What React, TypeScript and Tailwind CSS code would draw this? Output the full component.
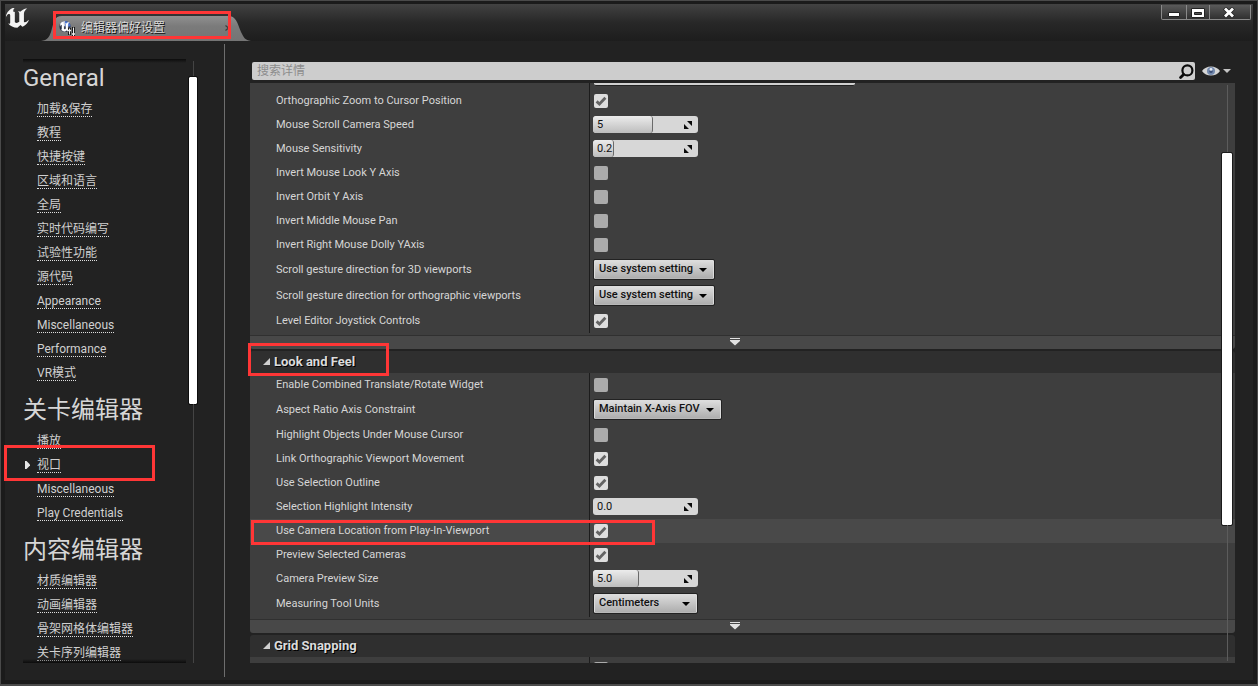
import React, { useState } from "react";

const UE_PATH =
  "M19.13 13.729c-.206.997-1.126 3.557-4.06 4.942l-1.179-1.325-1.988 2a7.338 7.338 0 01-5.804-2.978 2.859 2.859 0 00.65.123c.326.006.678-.114.678-.66v-5.394a.89.89 0 00-1.116-.89c-.92.212-1.656 2.509-1.656 2.509a7.304 7.304 0 012.528-5.597 7.408 7.408 0 013.73-1.721c-1.006.573-1.57 1.507-1.57 2.29 0 1.262.76 1.109.984.923v7.28a1.157 1.157 0 00.148.256 1.075 1.075 0 00.88.445c.76 0 1.747-.868 1.747-.868V9.172c0-.6-.452-1.324-.905-1.572 0 0 .838-.149 1.484.346a5.537 5.537 0 01.387-.425c1.508-1.48 2.929-1.902 4.112-2.112 0 0-2.151 1.69-2.151 3.96 0 1.687.043 5.801.043 5.801.799.771 1.986-.342 3.059-1.441z";

type Group = { title: string; links: string[] };

const groups: Group[] = [
  {
    title: "General",
    links: [
      "加载&保存",
      "教程",
      "快捷按键",
      "区域和语言",
      "全局",
      "实时代码编写",
      "试验性功能",
      "源代码",
      "Appearance",
      "Miscellaneous",
      "Performance",
      "VR模式",
    ],
  },
  { title: "关卡编辑器", links: ["播放", "视口", "Miscellaneous", "Play Credentials"] },
  { title: "内容编辑器", links: ["材质编辑器", "动画编辑器", "骨架网格体编辑器", "关卡序列编辑器"] },
];

type Setting =
  | { label: string; kind: "check"; on: boolean; active?: boolean }
  | { label: string; kind: "number"; value: string; fill: number }
  | { label: string; kind: "choice"; value: string; wide: string };

const viewportSettings: Setting[] = [
  { label: "Orthographic Zoom to Cursor Position", kind: "check", on: true },
  { label: "Mouse Scroll Camera Speed", kind: "number", value: "5", fill: 57 },
  { label: "Mouse Sensitivity", kind: "number", value: "0.2", fill: 20 },
  { label: "Invert Mouse Look Y Axis", kind: "check", on: false },
  { label: "Invert Orbit Y Axis", kind: "check", on: false },
  { label: "Invert Middle Mouse Pan", kind: "check", on: false },
  { label: "Invert Right Mouse Dolly YAxis", kind: "check", on: false },
  { label: "Scroll gesture direction for 3D viewports", kind: "choice", value: "Use system setting", wide: "w-[120px]" },
  { label: "Scroll gesture direction for orthographic viewports", kind: "choice", value: "Use system setting", wide: "w-[120px]" },
  { label: "Level Editor Joystick Controls", kind: "check", on: true },
];

const lookSettings: Setting[] = [
  { label: "Enable Combined Translate/Rotate Widget", kind: "check", on: false },
  { label: "Aspect Ratio Axis Constraint", kind: "choice", value: "Maintain X-Axis FOV", wide: "w-[127px]" },
  { label: "Highlight Objects Under Mouse Cursor", kind: "check", on: false },
  { label: "Link Orthographic Viewport Movement", kind: "check", on: true },
  { label: "Use Selection Outline", kind: "check", on: true },
  { label: "Selection Highlight Intensity", kind: "number", value: "0.0", fill: 0 },
  { label: "Use Camera Location from Play-In-Viewport", kind: "check", on: true, active: true },
  { label: "Preview Selected Cameras", kind: "check", on: true },
  { label: "Camera Preview Size", kind: "number", value: "5.0", fill: 44 },
  { label: "Measuring Tool Units", kind: "choice", value: "Centimeters", wide: "w-[103px]" },
];

function CheckControl({ id, on }: { id: string; on: boolean }) {
  const [checked, setChecked] = useState(on);
  return (
    <span className="relative ml-px flex size-[14px]">
      <input
        id={id}
        type="checkbox"
        checked={checked}
        onChange={(e) => setChecked(e.target.checked)}
        className="size-[14px] appearance-none rounded-[2px] bg-[#ababab] checked:bg-[#dedede]"
      />
      {checked && (
        <svg viewBox="0 0 14 14" className="pointer-events-none absolute inset-0 size-[14px]" aria-hidden="true">
          <path d="M2.6 7.4 5.4 10 11.4 3.8" fill="none" stroke="#646464" strokeWidth="2.8" />
        </svg>
      )}
    </span>
  );
}

function NumberControl({ id, value, fill }: { id: string; value: string; fill: number }) {
  return (
    <span className="relative flex h-[17px] w-[105px] overflow-hidden rounded-[3px] bg-[#d7d7d7]">
      {fill > 0 && (
        <span
          className="absolute inset-y-0 left-0 rounded-[3px] border-r border-[#6a6a6a] bg-linear-to-b from-[#ececec] to-[#bdbdbd]"
          style={{ width: `${fill}%` }}
        />
      )}
      <input
        id={id}
        type="text"
        defaultValue={value}
        className="relative w-full bg-transparent pl-1 text-[11px] leading-[17px] text-[#111] outline-none"
      />
      <svg viewBox="0 0 8 8" className="pointer-events-none absolute right-1.5 top-[5px] size-2" aria-hidden="true">
        <path d="M3 0H8V5zM0 3V8H5z" fill="#0a0a0a" />
      </svg>
    </span>
  );
}

function ChoiceControl({ id, value, wide }: { id: string; value: string; wide: string }) {
  return (
    <span className={`relative ml-px flex h-[19px] ${wide} rounded-[1px] outline outline-[#222]`}>
      <select
        id={id}
        defaultValue={value}
        className="h-full w-full appearance-none rounded-[1px] border border-[#dcdcdc] border-b-[#b8b8b8] bg-linear-to-b from-[#dcdcdc] to-[#aeaeae] pl-1 text-[11px] font-medium text-[#111]"
      >
        <option>{value}</option>
      </select>
      <svg viewBox="0 0 8 4" className="pointer-events-none absolute right-[7px] top-2 h-1 w-2" aria-hidden="true">
        <path d="M0 0H8L4 4z" fill="#000" />
      </svg>
    </span>
  );
}

function SettingRow({ item, id }: { item: Setting; id: string }) {
  const tall = item.kind === "choice";
  const active = item.kind === "check" && item.active;
  return (
    <div className={`flex ${tall ? "h-[26px]" : "h-6"} ${active ? "bg-[#494949]" : ""}`}>
      <label
        htmlFor={id}
        className="flex w-[340px] shrink-0 items-center border-r border-[#1c1c1c] pl-[26px] text-[11px] text-[#d6d6d6]"
      >
        {item.label}
      </label>
      <div className={`flex items-center pl-[3px] ${item.kind === "check" ? "" : "pb-px"}`}>
        {item.kind === "check" && <CheckControl id={id} on={item.on} />}
        {item.kind === "number" && <NumberControl id={id} value={item.value} fill={item.fill} />}
        {item.kind === "choice" && <ChoiceControl id={id} value={item.value} wide={item.wide} />}
      </div>
    </div>
  );
}

function Rows({ items, prefix }: { items: Setting[]; prefix: string }) {
  return (
    <div className="bg-[#3e3e3e] pb-0.5">
      {items.map((item, i) => (
        <SettingRow key={item.label} item={item} id={`${prefix}-${i}`} />
      ))}
    </div>
  );
}

function ShowAdvanced() {
  return (
    <button
      type="button"
      aria-label="Show advanced"
      className="mb-0.5 flex h-[14px] w-full items-center justify-center rounded-b-[3px] border-t border-[#303030] bg-[#484848] pr-4 pb-0.5"
    >
      <svg viewBox="0 0 10 8" className="h-2 w-[10px]" aria-hidden="true">
        <path d="M0 0H10V1H0zM0 2H10V3L5 7.6 0 3z" fill="#e2e2e2" />
      </svg>
    </button>
  );
}

function SectionHeader({ title }: { title: string }) {
  return (
    <h2 className="rounded-t-[3px] bg-[#2f2f2f]">
      <button
        type="button"
        className="flex h-[22px] w-full items-center gap-1 pl-[13px] text-[13px] font-bold text-[#dcdcdc] [text-shadow:1px_1px_0_#000]"
      >
        <svg viewBox="0 0 7 7" className="mb-0.5 size-[7px]" aria-hidden="true">
          <path d="M7 0V7H0z" fill="#cfcfcf" />
        </svg>
        {title}
      </button>
    </h2>
  );
}

function Sidebar() {
  return (
    <nav className="flex w-[219px] shrink-0 pl-[18px] pt-[18px] pb-[17px]">
      <div className="relative w-[163px] overflow-hidden">
        {groups.map((g, gi) => (
          <section key={g.title} className={gi > 0 ? "mt-1.5" : ""}>
            <h2 className="flex h-[38px] items-center text-2xl text-[#d6d6d6]">{g.title}</h2>
            <ul>
              {g.links.map((text) => (
                <li key={text} className="flex h-6 items-center">
                  <span className="flex w-[14px] shrink-0 justify-start">
                    {text === "视口" && (
                      <svg viewBox="0 0 5 8" className="ml-[2px] h-2 w-[5px]" aria-hidden="true">
                        <path d="M0 0H1.5L5 3.5V4.5L1.5 8H0z" fill="#e6e6e6" />
                      </svg>
                    )}
                  </span>
                  <a href="#" className="border-b border-dotted border-[#dedede] text-xs leading-[14px] text-[#d0d0d0]">
                    {text}
                  </a>
                </li>
              ))}
            </ul>
          </section>
        ))}
        <div className="pointer-events-none absolute inset-x-0 top-0 h-1 bg-linear-to-b from-[#0c0c0c] to-transparent" />
        <div className="pointer-events-none absolute inset-x-0 bottom-0 h-1 bg-linear-to-t from-[#0c0c0c] to-transparent" />
      </div>
      <div className="ml-[3px] flex w-2 flex-col items-center pt-0.5">
        <div className="h-4 w-px bg-[#444]" />
        <div className="h-[327px] w-2 rounded-[1px] bg-white outline outline-[#0d0d0d]" />
        <div className="w-px flex-1 bg-[#444]" />
      </div>
    </nav>
  );
}

function TitleBar() {
  const btn =
    "flex h-[15px] items-center justify-center border border-t-0 border-[#8a8a8a] bg-linear-to-b from-[#5a5a5a] to-[#303030]";
  return (
    <header className="flex h-[37px] shrink-0 items-end bg-linear-to-b from-[#424242] via-[#282828] to-[#1d1d1d]">
      <svg viewBox="4.8 5.3 14.4 14.2" className="mb-[13px] ml-px h-5 w-[23px]" preserveAspectRatio="none" aria-hidden="true">
        <path d={UE_PATH} fill="#f4f4f4" />
      </svg>
      <div className="relative ml-3 flex h-[26px] w-[210px] items-center pl-[18px]">
        <svg viewBox="0 0 210 26" className="absolute inset-0 h-[26px] w-[210px]" aria-hidden="true">
          <defs>
            <linearGradient id="tab" x1="0" y1="0" x2="0" y2="1">
              <stop offset="0" stopColor="#909090" />
              <stop offset="0.4" stopColor="#7b7b7b" />
              <stop offset="1" stopColor="#747474" />
            </linearGradient>
          </defs>
          <path d="M0 26C7 25 8 22 10 17C13 7 13 1 21 1H187C195 1 196 7 200 17C203 23 204 25 210 26z" fill="url(#tab)" />
        </svg>
        <svg viewBox="0 0 17 17" className="relative size-[17px]" aria-hidden="true">
          <circle cx="6" cy="6.5" r="5.6" fill="#262c40" />
          <path d="M6 0.9A5.6 5.6 0 0 1 11.6 6.5L6 6.5z" fill="#4a74d0" />
          <path d="M6 0.9A5.6 5.6 0 0 0 1 4L6 6.5z" fill="#c2c8d8" />
          <svg x="0.8" y="1.8" width="10.6" height="10" viewBox="4.8 5.3 14.4 14.2">
            <path d={UE_PATH} fill="#fff" stroke="#fff" strokeWidth="0.4" />
          </svg>
          <path d="M10.5 8V15M14.5 7V16.5" stroke="#111" strokeWidth="3" />
          <path d="M10.5 8.5V14.5M14.5 7.5V16" stroke="#eee" strokeWidth="1.1" />
          <path d="M9 10.5H12M13 14H16" stroke="#eee" strokeWidth="1.6" />
        </svg>
        <span className="relative ml-[5px] text-xs text-[#dadada] [text-shadow:1px_1px_0_#111]">编辑器偏好设置</span>
        <button type="button" aria-label="Close tab" className="relative ml-auto mr-[21px] flex">
          <svg viewBox="0 0 5 6" className="h-1.5 w-[5px]" aria-hidden="true">
            <path d="M0.5 0.5 3.5 3 0.5 5.5" fill="none" stroke="#3c3c3c" strokeWidth="1.2" />
          </svg>
        </button>
      </div>
      <div className="ml-auto mr-[2px] flex self-start pt-px">
        <button type="button" aria-label="Minimize" className={`${btn} w-[26px] rounded-bl-[2px]`}>
          <svg viewBox="0 0 12 5" className="mt-1 h-[5px] w-3" aria-hidden="true">
            <path d="M0.5 0.5H11.5V4.5H0.5z" fill="#fff" stroke="#222" />
          </svg>
        </button>
        <button type="button" aria-label="Maximize" className={`${btn} w-[23px] border-l-0`}>
          <svg viewBox="0 0 14 10" className="mt-px h-[10px] w-[14px]" aria-hidden="true">
            <path d="M0.5 0.5H13.5V9.5H0.5z" fill="#fff" stroke="#222" />
            <path d="M3.5 4.5H10.5V6.5H3.5z" fill="#555" stroke="#222" />
          </svg>
        </button>
        <button type="button" aria-label="Close" className={`${btn} w-[41px] rounded-br-[2px] border-l-0`}>
          <svg viewBox="0 0 12 11" className="mr-0.5 h-[11px] w-3" aria-hidden="true">
            <path d="M1.5 1 10.5 10M10.5 1 1.5 10" stroke="#222" strokeWidth="4.4" />
            <path d="M2 1.5 10 9.5M10 1.5 2 9.5" stroke="#fff" strokeWidth="2.8" />
          </svg>
        </button>
      </div>
    </header>
  );
}

function SearchBar() {
  return (
    <div className="flex h-[18px] shrink-0 items-center pl-0.5">
      <div className="flex h-full flex-1 items-center rounded-[2px] bg-[#cdcdcd] pl-[5px] pr-px">
        <input
          type="text"
          aria-label="搜索详情"
          placeholder="搜索详情"
          className="h-full flex-1 bg-transparent text-xs text-[#222] outline-none placeholder:text-[#8c8c8c]"
        />
        <svg viewBox="0 0 15 15" className="size-[15px]" aria-hidden="true">
          <circle cx="8.4" cy="6.4" r="5" fill="none" stroke="#0a0a0a" strokeWidth="2.2" />
          <path d="M4.6 10.4 1.6 13.4" stroke="#0a0a0a" strokeWidth="2.8" strokeLinecap="round" />
        </svg>
      </div>
      <button type="button" aria-label="View options" className="ml-[7px] mr-1 flex items-center gap-[3px]">
        <svg viewBox="0 0 18 12" className="h-3 w-[18px]" aria-hidden="true">
          <path d="M0 6C4 0 14 0 18 6C14 12 4 12 0 6z" fill="#d6d6d6" />
          <circle cx="9" cy="6" r="4" fill="#7389ad" />
          <circle cx="9" cy="6.4" r="1.7" fill="#3d5078" />
          <circle cx="9" cy="4.4" r="1.4" fill="#e6ecf6" />
        </svg>
        <svg viewBox="0 0 8 4" className="h-1 w-2" aria-hidden="true">
          <path d="M0 0H8L4 4z" fill="#c4c4c4" />
        </svg>
      </button>
    </div>
  );
}

export default function App() {
  return (
    <div className="relative flex h-screen flex-col overflow-hidden border border-b-2 border-[#4a4a4a] bg-[#1b1b1b] px-1 pt-[3px] pb-1 [font-family:Roboto,'Noto_Sans_CJK_SC',sans-serif]">
      <TitleBar />
      <div className="flex min-h-0 flex-1 bg-[#222]">
        <Sidebar />
        <div className="my-[3px] w-px shrink-0 bg-[#6e6e6e]" />
        <main className="flex min-w-0 flex-1 flex-col gap-[3px] pt-[21px] pr-[18px] pb-[17px] pl-[25px]">
          <SearchBar />
          <div className="relative min-h-0 flex-1 overflow-hidden">
            <div className="flex h-1.5 bg-[#3e3e3e]">
              <div className="w-[340px] border-r border-[#1c1c1c]" />
              <div className="ml-1 h-[3px] w-[261px] rounded-b-[2px] border-b border-[#222] bg-[#d0d0d0]" />
            </div>
            <Rows items={viewportSettings} prefix="viewport" />
            <ShowAdvanced />
            <SectionHeader title="Look and Feel" />
            <Rows items={lookSettings} prefix="look" />
            <ShowAdvanced />
            <SectionHeader title="Grid Snapping" />
            <div className="flex h-6 bg-[#3e3e3e]">
              <div className="w-[340px] border-r border-[#1c1c1c]" />
              <div className="flex items-center pl-[3px]">
                <input
                  type="checkbox"
                  aria-label="Grid Snapping option"
                  className="ml-px size-[14px] appearance-none rounded-[2px] bg-[#ababab] checked:bg-[#dedede]"
                />
              </div>
            </div>
            <div className="absolute top-0.5 right-[3px] bottom-0.5 flex w-[10px] flex-col items-center">
              <div className="h-[68px] w-px bg-[#5c5c5c]" />
              <div className="h-[372px] w-[10px] rounded-[1px] bg-white outline outline-[#1a1a1a]" />
              <div className="w-px flex-1 bg-[#5c5c5c]" />
            </div>
          </div>
        </main>
      </div>
      <div className="pointer-events-none absolute top-[10px] left-[52px] h-7 w-[178px] border-3 border-[#ff3636]" />
      <div className="pointer-events-none absolute top-[444px] left-[3px] h-[36px] w-[151px] border-3 border-[#ff3636]" />
      <div className="pointer-events-none absolute top-[342px] left-[247px] h-[33px] w-[141px] border-3 border-[#ff3636]" />
      <div className="pointer-events-none absolute top-[519px] left-[250px] h-[25px] w-[404px] border-3 border-[#ff3636]" />
    </div>
  );
}
